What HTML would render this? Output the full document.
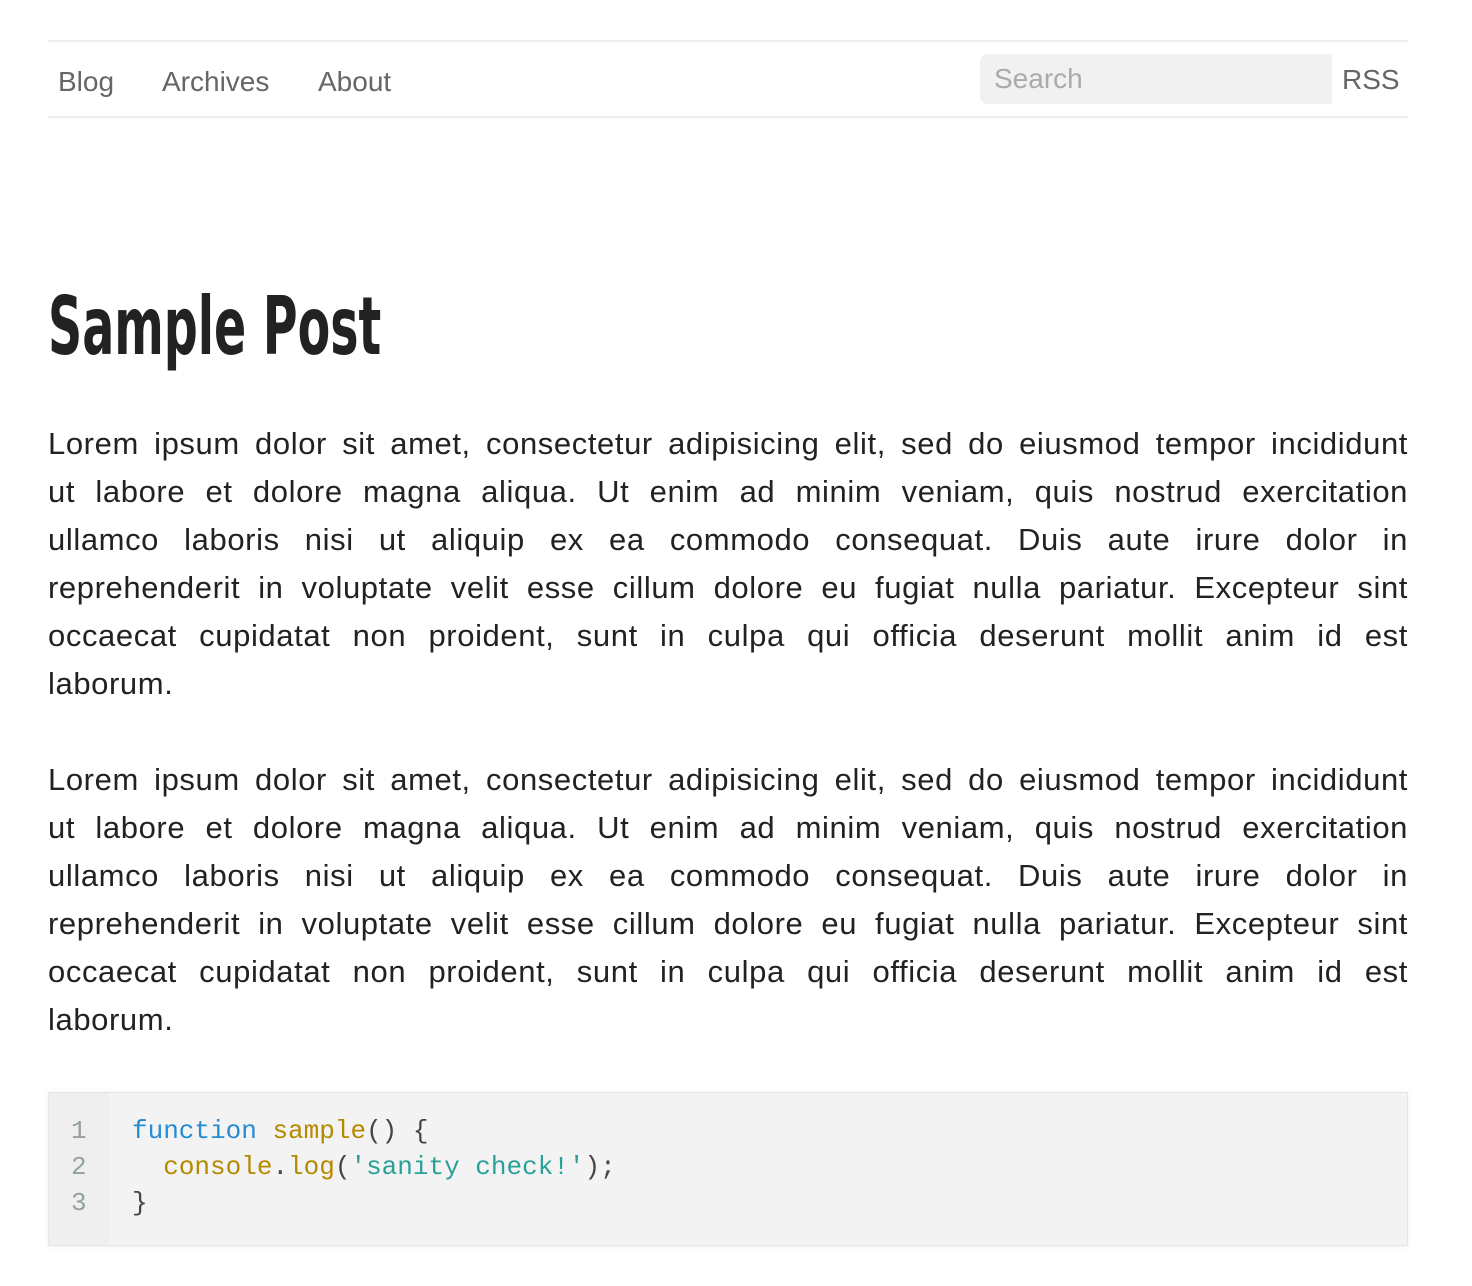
<!DOCTYPE html>
<html><head><meta charset="utf-8"><style>
body{margin:0;background:#fff;font-family:"Liberation Sans",sans-serif;color:#222}
.wrap{position:relative;width:1472px;height:1286px}
.line{position:absolute;left:48px;width:1360px;height:2px;background:#eee}
.nav{position:absolute;top:64px;font-size:28px;color:#666;line-height:36px}
.search{position:absolute;left:980px;top:54px;width:352px;height:50px;background:#f1f1f1;border-radius:8px 0 0 8px}
.search span{position:absolute;left:14px;top:8px;font-size:28px;color:#aaa;line-height:34px}
h1{position:absolute;left:48px;top:282px;margin:0;font-family:"Liberation Sans Narrow","DejaVu Sans Condensed",sans-serif;font-weight:bold;font-size:80px;line-height:90px;color:#222;transform:scaleX(0.66);transform-origin:left;white-space:nowrap}
.p{position:absolute;left:48px;width:1360px;font-size:31px;line-height:48px;color:#222;letter-spacing:0.6px}
.p div{text-align:justify;text-align-last:justify;white-space:nowrap}
.p div.l{text-align-last:left}
.code{position:absolute;left:48px;top:1092px;width:1358px;height:152px;background:#f3f3f3;border:1px solid #e6e6e6;box-shadow:0 1px 6px rgba(0,0,0,.06)}
.gut{position:absolute;left:0;top:0;width:60px;height:152px;background:#efefef}
pre{margin:0;position:absolute;top:20px;font-family:"Liberation Mono",monospace;font-size:26px;line-height:36px}
.k{color:#268bd2}.f{color:#b58900}.s{color:#2aa198}.n{color:#93a1a1}.d{color:#444}
</style></head><body><div class="wrap">
<div class="line" style="top:40px"></div>
<div class="line" style="top:116px"></div>
<div class="nav" style="left:58px">Blog</div>
<div class="nav" style="left:162px">Archives</div>
<div class="nav" style="left:318px">About</div>
<div class="search"><span>Search</span></div>
<div class="nav" style="left:1342px;top:62px">RSS</div>
<h1>Sample Post</h1>
<div class="p" style="top:420px">
<div style="white-space:normal">Lorem ipsum dolor sit amet, consectetur adipisicing elit, sed do eiusmod tempor incididunt</div>
<div>ut labore et dolore magna aliqua. Ut enim ad minim veniam, quis nostrud exercitation</div>
<div>ullamco laboris nisi ut aliquip ex ea commodo consequat. Duis aute irure dolor in</div>
<div>reprehenderit in voluptate velit esse cillum dolore eu fugiat nulla pariatur. Excepteur sint</div>
<div>occaecat cupidatat non proident, sunt in culpa qui officia deserunt mollit anim id est</div>
<div class="l">laborum.</div>
</div>
<div class="p" style="top:756px">
<div style="white-space:normal">Lorem ipsum dolor sit amet, consectetur adipisicing elit, sed do eiusmod tempor incididunt</div>
<div>ut labore et dolore magna aliqua. Ut enim ad minim veniam, quis nostrud exercitation</div>
<div>ullamco laboris nisi ut aliquip ex ea commodo consequat. Duis aute irure dolor in</div>
<div>reprehenderit in voluptate velit esse cillum dolore eu fugiat nulla pariatur. Excepteur sint</div>
<div>occaecat cupidatat non proident, sunt in culpa qui officia deserunt mollit anim id est</div>
<div class="l">laborum.</div>
</div>
<div class="code"><div class="gut"></div>
<pre class="n" style="left:22px">1
2
3</pre>
<pre class="d" style="left:83px"><span class="k">function</span> <span class="f">sample</span>() {
  <span class="f">console</span>.<span class="f">log</span>(<span class="s">'sanity check!'</span>);
}</pre>
</div>
</div></body></html>
